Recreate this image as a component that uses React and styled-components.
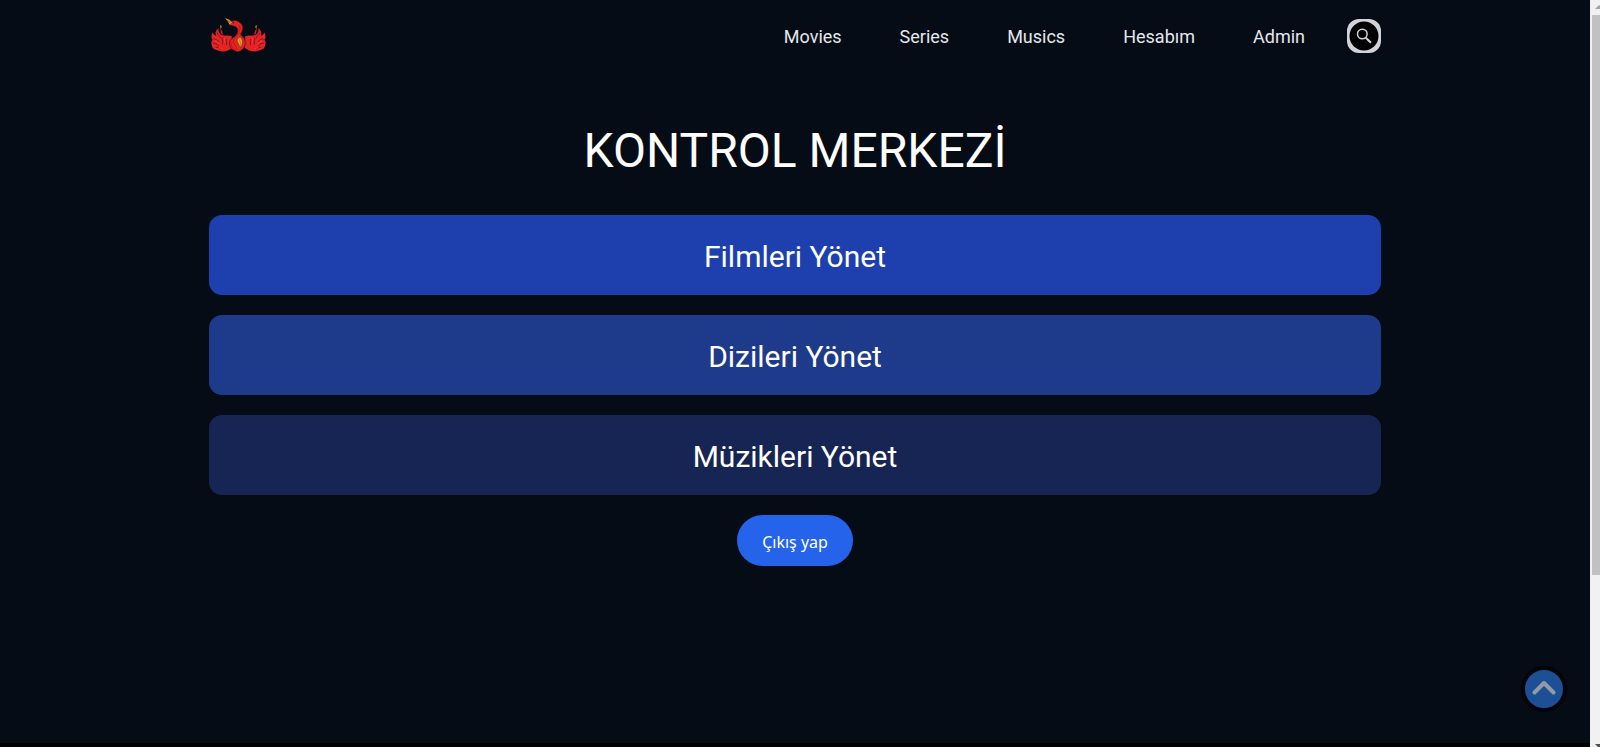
import React from "react";
import styled, { createGlobalStyle } from "styled-components";

const GlobalStyle = createGlobalStyle`
  *, *::before, *::after { box-sizing: border-box; }
  html, body { margin: 0; background: #000; }
  body { font-family: Roboto, "Liberation Sans", sans-serif; color: #fff; }
`;

const Screen = styled.div`
  display: grid;
  grid-template-columns: minmax(0, 1fr) 10px;
  height: 100vh;
  overflow: hidden;
`;

const Page = styled.div`
  margin-bottom: 4px;
  padding: 0 24px;
  background: #050c15;
`;

const Container = styled.div`
  max-width: 1172px;
  margin: 0 auto;
`;

const Header = styled.header`
  display: flex;
  align-items: center;
  justify-content: space-between;
  height: 71px;
`;

const LogoLink = styled.a`
  display: flex;
  svg { display: block; width: 60px; height: 38px; }
`;

const Nav = styled.nav`
  display: flex;
  align-items: center;
  gap: 58px;
`;

const NavLink = styled.a`
  padding-top: 2px;
  color: #e5e7eb;
  font-size: 18px;
  line-height: 28px;
  text-decoration: none;
`;

const NavArea = styled.div`
  display: flex;
  align-items: center;
  gap: 42px;
`;

const SearchButton = styled.button`
  display: grid;
  place-items: center;
  width: 34px;
  height: 34px;
  padding: 0;
  border: 0;
  border-radius: 12px;
  background: #d1d5db;
  cursor: pointer;
  svg { display: block; width: 30px; height: 30px; }
`;

const Title = styled.h1`
  margin: 44px 0 28px;
  font-size: 48px;
  font-weight: 400;
  line-height: 72px;
  text-align: center;
`;

const Panel = styled.main`
  display: flex;
  flex-direction: column;
  align-items: center;
  gap: 20px;
`;

const ManageLink = styled.a`
  display: flex;
  align-items: center;
  justify-content: center;
  align-self: stretch;
  height: 80px;
  padding-top: 3px;
  border-radius: 13px;
  background: ${({ $tone }) => $tone};
  color: #fff;
  font-size: 30px;
  line-height: 40px;
  text-decoration: none;
`;

const LogoutButton = styled.button`
  height: 51px;
  padding: 2px 25px 0;
  border: 0;
  border-radius: 26px;
  background: #2563eb;
  color: #fff;
  font-family: "Noto Sans", sans-serif;
  font-size: 16px;
  line-height: 24px;
  cursor: pointer;
`;

const TopButton = styled.button`
  position: fixed;
  right: 33px;
  bottom: 35px;
  width: 46px;
  height: 46px;
  padding: 0;
  border: 4px solid #01050a;
  border-radius: 50%;
  background: #1c4f94;
  cursor: pointer;
  svg { display: block; width: 38px; height: 38px; }
`;

const ScrollTrack = styled.div`
  display: flex;
  flex-direction: column;
  align-items: flex-end;
  justify-content: space-between;
  background: #f1f1f1;
  overflow: hidden;
  svg { display: block; flex: none; width: 8px; }
`;

const ScrollThumb = styled.div`
  width: 8px;
  flex: 0 0 75%;
  margin-bottom: auto;
  background: #c1c1c1;
`;

const links = ["Movies", "Series", "Musics", "Hesabım", "Admin"];

const sections = [
  { label: "Filmleri Yönet", tone: "#1e40af" },
  { label: "Dizileri Yönet", tone: "#1e3a8a" },
  { label: "Müzikleri Yönet", tone: "#172554" },
];

function PhoenixWing() {
  return (
    <g>
      <path fill="#e32424" d="M98 77C86 73 79 77 72 75C62 73 57 66 59 54C51 60 47 68 52 76C47 76 42 72 41 66C36 76 36 84 41 89C36 94 36 100 39 105C38 113 45 118 55 120C71 127 88 123 100 112Z" />
      <path fill="none" stroke="#5b0a10" strokeWidth="2" d="M54 67C57 75 64 77 65 83M43 86C50 85 56 89 60 95M42 99C49 97 54 101 59 108M50 111C55 110 61 113 65 118M70 82C67 88 75 94 70 102M83 86C79 92 84 97 82 104" />
      <path fill="none" stroke="#fb4a35" strokeWidth="2" d="M48 92C52 91 56 95 59 100M58 114C62 111 67 114 70 117M77 82C74 88 78 93 78 98" />
      <path fill="#d51d20" d="M65 57C62 61 67 65 66 70L74 74C68 67 73 64 65 57Z" />
      <path fill="#d89727" d="M65 43C62 48 66 50 64 57C70 51 68 47 65 43Z" />
    </g>
  );
}

function PhoenixLogo() {
  return (
    <svg viewBox="30 20 180 114" aria-hidden="true">
      <PhoenixWing />
      <g transform="translate(237 0) scale(-1 1)"><PhoenixWing /></g>
      <path fill="#e32424" stroke="#510a10" strokeWidth="2" d="M91 42C95 31 107 27 119 34C135 43 133 58 126 69C123 75 131 77 137 88C143 101 135 119 118 124C99 122 89 108 92 94C95 83 107 83 113 72C119 61 117 51 108 48C102 46 96 47 91 42Z" />
      <path fill="none" stroke="#a5131a" strokeWidth="2" d="M118 43C126 49 124 59 118 69C113 79 103 86 103 94C105 105 114 106 114 119M96 96C96 107 101 114 110 119" />
      <path fill="#e9a12b" stroke="#73330d" strokeWidth="2" d="M124 80C114 83 112 91 118 99C119 104 122 108 125 110C133 101 132 88 124 80Z" />
      <path fill="none" stroke="#ba5619" strokeWidth="2" d="M123 84C120 92 126 96 124 105" />
      <path fill="#d9a026" d="M78 23L91 28L99 36L92 43L87 34Z" />
      <path fill="none" stroke="#603d12" strokeWidth="2" d="M84 29L94 37" />
      <circle cx="103" cy="37" r="2" fill="#18070a" />
    </svg>
  );
}

export default function App() {
  return (
    <>
      <GlobalStyle />
      <Screen>
        <Page>
          <Container>
            <Header>
              <LogoLink href="#" aria-label="Home"><PhoenixLogo /></LogoLink>
              <NavArea>
                <Nav>
                  {links.map((label) => <NavLink key={label} href="#">{label}</NavLink>)}
                </Nav>
                <SearchButton aria-label="Search">
                  <svg viewBox="0 0 30 30" fill="none">
                    <circle cx="15" cy="15" r="14.5" fill="#000" />
                    <circle cx="13.3" cy="13" r="4.8" stroke="#d1d5db" strokeWidth="1.5" />
                    <path d="M16.8 16.8L22 21.7" stroke="#d1d5db" strokeWidth="2" />
                  </svg>
                </SearchButton>
              </NavArea>
            </Header>
            <Title>KONTROL MERKEZİ</Title>
            <Panel>
              {sections.map(({ label, tone }) => (
                <ManageLink key={label} href="#" $tone={tone}>{label}</ManageLink>
              ))}
              <LogoutButton>Çıkış yap</LogoutButton>
            </Panel>
          </Container>
          <TopButton aria-label="Back to top">
            <svg viewBox="0 0 38 38" fill="none">
              <path d="M9.5 22.5L19 13L28.5 22.5" stroke="#929ba5" strokeWidth="4" strokeLinecap="round" strokeLinejoin="round" />
            </svg>
          </TopButton>
        </Page>
        <ScrollTrack aria-hidden="true">
          <svg viewBox="0 0 8 15" height="15"><path d="M3 9L7 5L8 6V9Z" fill="#a3a3a3" /></svg>
          <ScrollThumb />
          <svg viewBox="0 0 8 4" height="4"><path d="M3 1H8V4H6Z" fill="#505050" /></svg>
        </ScrollTrack>
      </Screen>
    </>
  );
}
